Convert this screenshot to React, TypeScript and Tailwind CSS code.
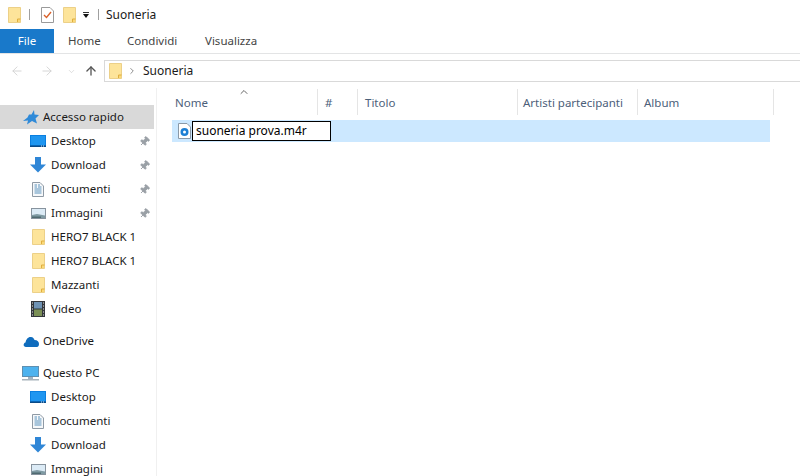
import { ArrowLeft, ArrowRight, ArrowUp, ChevronDown, ChevronRight, ChevronUp, Pin } from "lucide-react";

const Folder = ({ className = "" }: { className?: string }) => (
  <svg width="13" height="16" viewBox="0 0 13 16" className={className}>
    <path d="M0.5 0.5H12.5V15.5H0.5Z" fill="#fbd978" stroke="#ecd088" />
    <path d="M1 1H12V12H9.5V15H1Z" fill="#fde49a" />
    <path d="M9.5 15V12H12.5" fill="none" stroke="#dfae3f" />
  </svg>
);

const DesktopIcon = () => (
  <svg width="16" height="12" viewBox="0 0 16 12">
    <rect width="16" height="12" fill="#0a7fe0" />
    <rect x="1" y="1" width="14" height="9" fill="#1f96f0" />
    <rect y="10.5" width="16" height="1.5" fill="#0b4a86" />
    <path d="M11 11H12M13 11H14" stroke="#cfe6f8" />
  </svg>
);

const DownloadIcon = () => (
  <svg width="16" height="16" viewBox="0 0 16 16">
    <path d="M5 0H11V7.5H16L8 15.5L0 7.5H5Z" fill="#2f86d6" />
  </svg>
);

const DocumentIcon = () => (
  <svg width="12" height="15" viewBox="0 0 12 15">
    <path d="M0.5 0.5H8L11.5 4V14.5H0.5Z" fill="#f6f8fa" stroke="#8f9aa5" />
    <path d="M6 3H8M2.5 5H5M6 5H9.5M2.5 7H9.5M2.5 9H9.5M2.5 11H9.5M2.5 3H5" stroke="#5b93bd" />
  </svg>
);

const ImageIcon = () => (
  <svg width="15" height="11" viewBox="0 0 15 11">
    <rect x="0.5" y="0.5" width="14" height="10" fill="#dcebf6" stroke="#87939e" />
    <path d="M1 7L6 6L14 7.5V10H1Z" fill="#7f9aa3" />
    <path d="M1 8.5H10V10H1Z" fill="#4f6a70" />
  </svg>
);

const VideoIcon = () => (
  <svg width="14" height="16" viewBox="0 0 14 16">
    <rect width="14" height="16" fill="#33363b" />
    <rect x="3" y="1" width="8" height="6.5" fill="#6f93b5" />
    <rect x="3" y="8.5" width="8" height="6.5" fill="#7a8f55" />
    <path d="M1 2H2M1 5H2M1 8H2M1 11H2M1 14H2M12 2H13M12 5H13M12 8H13M12 11H13M12 14H13" stroke="#e5e5e5" />
  </svg>
);

const StarIcon = () => (
  <svg width="16" height="15" viewBox="0 0 16 15">
    <path d="M11 0L11.5 4.5L16 5L12.5 8.5L14 13.5L9 11L4 14.5L5 10.5L0 11L4.5 7.5L6 4.5L8.5 4.5Z" fill="#2f8ad8" />
  </svg>
);

const CloudIcon = () => (
  <svg width="16" height="11" viewBox="0 0 16 11">
    <path d="M3 11C0 11 0 7 2.5 6.5C3 3 5.5 0.5 8 1C10 1 11 2.5 11.5 4C14.5 4 16 6 16 8C16 10 15 11 14 11Z" fill="#0f6cbd" />
  </svg>
);

const PcIcon = () => (
  <svg width="17" height="15" viewBox="0 0 17 15">
    <rect x="0.5" y="0.5" width="16" height="10" fill="#4db2ee" stroke="#5f8fb0" />
    <rect x="6" y="11" width="5" height="2" fill="#9fb4c4" />
    <rect y="13" width="17" height="1.5" fill="#a8b3bb" />
  </svg>
);

const sidebar = [
  { label: "Accesso rapido", icon: <StarIcon />, level: 0, selected: true },
  { label: "Desktop", icon: <DesktopIcon />, level: 1, pin: true },
  { label: "Download", icon: <DownloadIcon />, level: 1, pin: true },
  { label: "Documenti", icon: <DocumentIcon />, level: 1, pin: true },
  { label: "Immagini", icon: <ImageIcon />, level: 1, pin: true },
  { label: "HERO7 BLACK 1", icon: <Folder />, level: 1 },
  { label: "HERO7 BLACK 1", icon: <Folder />, level: 1 },
  { label: "Mazzanti", icon: <Folder />, level: 1 },
  { label: "Video", icon: <VideoIcon />, level: 1 },
  { gap: true },
  { label: "OneDrive", icon: <CloudIcon />, level: 0 },
  { gap: true },
  { label: "Questo PC", icon: <PcIcon />, level: 0 },
  { label: "Desktop", icon: <DesktopIcon />, level: 1 },
  { label: "Documenti", icon: <DocumentIcon />, level: 1 },
  { label: "Download", icon: <DownloadIcon />, level: 1 },
  { label: "Immagini", icon: <ImageIcon />, level: 1 },
];

const columns = [
  { label: "Nome", className: "w-[146px] pl-[3px]" },
  { label: "#", className: "w-[40px] pl-[7px]" },
  { label: "Titolo", className: "w-[160px] pl-[7px]" },
  { label: "Artisti partecipanti", className: "w-[120px] pl-[5px]" },
  { label: "Album", className: "w-[136px] pl-[6px]" },
];

const App = () => {
  return (
    <div className="w-[800px] h-[476px] overflow-hidden bg-white flex flex-col text-[11.5px] text-[#1a1a1a] font-['Noto_Sans',sans-serif]">
      <div className="h-[29px] flex items-center pl-2 shrink-0">
        <Folder />
        <div className="w-px h-[11px] bg-[#a0a0a0] ml-[8px]" />
        <svg width="13" height="16" viewBox="0 0 13 16" className="ml-[11px]">
          <path d="M0.5 0.5H9L12.5 4V15.5H0.5Z" fill="#fff" stroke="#9a9a9a" />
          <path d="M3 8L5.5 10.5L10 5" fill="none" stroke="#d9622b" strokeWidth="1.4" />
        </svg>
        <Folder className="ml-[9px]" />
        <div className="ml-[7px] flex flex-col items-center gap-px">
          <div className="w-[6px] h-px bg-[#333]" />
          <div className="w-0 h-0 border-x-[3.5px] border-x-transparent border-t-[4px] border-t-[#111]" />
        </div>
        <div className="w-px h-[11px] bg-[#a0a0a0] ml-[9px]" />
        <span className="ml-[7px] text-[12px]">Suoneria</span>
      </div>

      <div className="h-[25px] flex shrink-0 border-b border-[#e3e4e5]">
        <div className="w-[54px] h-[24px] bg-[#1979ca] text-white flex items-center justify-center">File</div>
        <div className="ml-[14px] w-[40px] h-[24px] flex items-center text-[#444]">Home</div>
        <div className="ml-[19px] w-[49px] h-[24px] flex items-center text-[#444]">Condividi</div>
        <div className="ml-[29px] h-[24px] flex items-center text-[#444]">Visualizza</div>
      </div>

      <div className="h-[34px] flex items-center shrink-0 pl-[10px]">
        <ArrowLeft size={14} strokeWidth={1.5} className="text-[#d0d0d0]" />
        <ArrowRight size={14} strokeWidth={1.5} className="text-[#d0d0d0] ml-[16px]" />
        <ChevronDown size={9} strokeWidth={1.5} className="text-[#c8c8c8] ml-[13px]" />
        <ArrowUp size={14} strokeWidth={2.25} className="text-[#555] ml-[8px]" />
        <div className="ml-[6px] flex-1 h-[22px] border border-r-0 border-[#d9d9d9] flex items-center pl-[4px]">
          <Folder />
          <ChevronRight size={10} strokeWidth={2} className="text-[#777] ml-[5px]" />
          <span className="ml-[6px] text-[12px]">Suoneria</span>
        </div>
      </div>

      <div className="flex flex-1 min-h-0">
        <div className="w-[157px] shrink-0 border-r border-[#f0f0f0] pt-[17px] pr-[2px] overflow-hidden">
          {sidebar.map((item, i) =>
            item.gap ? (
              <div key={i} className="h-[8px]" />
            ) : (
              <div
                key={i}
                className={`h-[24px] flex items-center relative ${item.selected ? "bg-[#d9d9d9]" : ""} ${item.level ? "pl-[30px]" : "pl-[22px]"}`}
              >
                <span className={`flex items-center justify-center shrink-0 ${item.level ? "w-[16px] mr-[5px]" : "w-[17px] mr-[4px]"}`}>
                  {item.icon}
                </span>
                <span className="whitespace-nowrap">{item.label}</span>
                {item.pin && (
                  <Pin size={11} className="absolute right-[4px] top-[7px] rotate-45 text-[#9aa0a6] fill-[#9aa0a6]" />
                )}
              </div>
            )
          )}
        </div>

        <div className="flex-1 pl-[15px] pt-[1px] min-w-0">
          <div className="flex h-[27px] relative">
            <ChevronUp size={12} strokeWidth={2} className="absolute left-[66px] -top-[3px] text-[#666]" />
            {columns.map((col) => (
              <div
                key={col.label}
                className={`${col.className} shrink-0 h-[26px] border-r border-[#e5e5e5] flex items-center pt-[2px] text-[#4c607a] whitespace-nowrap`}
              >
                {col.label}
              </div>
            ))}
          </div>
          <div className="mt-[4px] w-[598px] h-[22px] bg-[#cce8ff] flex items-center pl-[6px]">
            <svg width="13" height="16" viewBox="0 0 13 16">
              <path d="M0.5 0.5H9L12.5 4V15.5H0.5Z" fill="#fff" stroke="#8a99a8" />
              <circle cx="6.5" cy="9" r="4" fill="#1d7fd4" />
              <circle cx="6.5" cy="9" r="1.5" fill="#fff" />
            </svg>
            <div className="ml-[1px] w-[139px] h-[20px] bg-white border border-black flex items-center pl-[3px] text-[12px] text-black whitespace-nowrap">
              suoneria prova.m4r
            </div>
          </div>
        </div>
      </div>
    </div>
  );
};

export default App;
